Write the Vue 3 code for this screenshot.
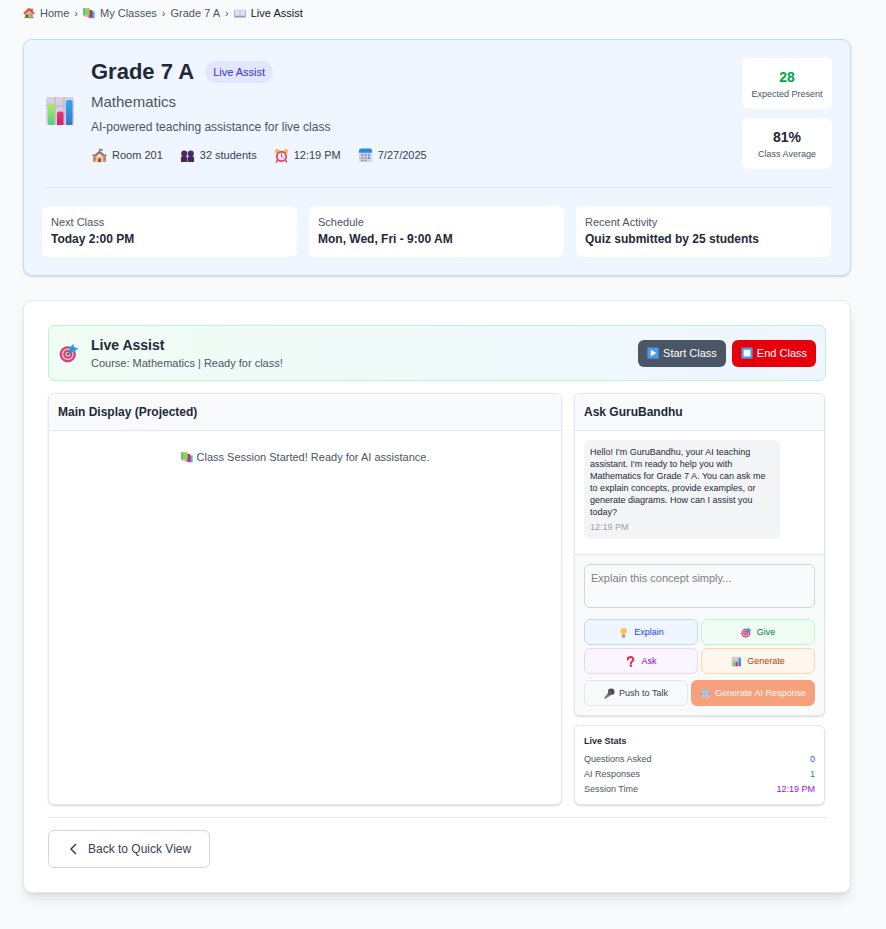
<script setup>
import { ref } from 'vue'

const meta = [
  { icon: 'school', text: 'Room 201' },
  { icon: 'people', text: '32 students' },
  { icon: 'clock', text: '12:19 PM' },
  { icon: 'calendar', text: '7/27/2025' },
]
const facts = [
  { label: 'Next Class', value: 'Today 2:00 PM' },
  { label: 'Schedule', value: 'Mon, Wed, Fri - 9:00 AM' },
  { label: 'Recent Activity', value: 'Quiz submitted by 25 students' },
]
const actions = [
  { icon: 'bulb', text: 'Explain', tone: 'blue' },
  { icon: 'target', text: 'Give', tone: 'green' },
  { icon: 'question', text: 'Ask', tone: 'purple' },
  { icon: 'chart', text: 'Generate', tone: 'orange' },
]
const stats = [
  { label: 'Questions Asked', value: '0', tone: 'v-blue' },
  { label: 'AI Responses', value: '1', tone: 'v-green' },
  { label: 'Session Time', value: '12:19 PM', tone: 'v-purple' },
]
const prompt = ref('')
</script>

<template>
  <div class="page">
    <svg class="defs" aria-hidden="true">
      <defs>
        <linearGradient id="g-green" x1="0" y1="0" x2="0" y2="1"><stop offset="0" stop-color="#b5ea5c" /><stop offset="1" stop-color="#4fd08c" /></linearGradient>
        <linearGradient id="g-blue" x1="0" y1="0" x2="0" y2="1"><stop offset="0" stop-color="#31a8f5" /><stop offset="1" stop-color="#3574cb" /></linearGradient>
        <linearGradient id="g-pink" x1="0" y1="0" x2="0" y2="1"><stop offset="0" stop-color="#e9356e" /><stop offset="1" stop-color="#d3216a" /></linearGradient>
        <linearGradient id="g-bulb" x1="0" y1="0" x2="1" y2="1"><stop offset="0" stop-color="#ffdf5d" /><stop offset="1" stop-color="#f5a73b" /></linearGradient>
      </defs>
      <symbol id="i-chart" viewBox="0 0 32 32">
        <rect x="2" y="2" width="28" height="28" rx="2" fill="#d6d0df" />
        <path d="M2 11h28M2 20h28M11 2v28M20 2v28" stroke="#b9afc5" stroke-width="1" />
        <path d="M4 30V10.500a2 2 0 0 1 2-2h2.500a2 2 0 0 1 2 2V30z" fill="url(#g-green)" />
        <path d="M13 30V18.500a2 2 0 0 1 2-2h2.500a2 2 0 0 1 2 2V30z" fill="url(#g-pink)" />
        <path d="M22 30V7a2 2 0 0 1 2-2h2.500a2 2 0 0 1 2 2v23z" fill="url(#g-blue)" />
      </symbol>
      <symbol id="i-home" viewBox="0 0 32 32">
        <path d="M22 4h4v9h-4z" fill="#a65245" />
        <path d="M5 15 16 6l11 9v14H5z" fill="#f3b07c" />
        <path d="M1 16 14.500 3.500a2 2 0 0 1 3 0L31 16l-2 4L16 9 3 20z" fill="#df493f" />
        <path d="M7 20h7v9H7z" fill="#72534c" />
        <path d="M18 18h7v7h-7z" fill="#59b4e8" />
        <path d="M4 26h4v4H4zM14 26h14v4H14z" fill="#7baa4b" />
      </symbol>
      <symbol id="i-books" viewBox="0 0 32 32">
        <path d="M20 12h11v18H20z" fill="#37b5ef" />
        <path d="M13 8h12v19l-12 1z" fill="#ca2464" />
        <path d="M1 3h17v20H1z" fill="#8bd160" />
        <path d="M1 3h3v20H1z" fill="#55a661" />
        <path d="M2 23h16l-2 3H5z" fill="#bda9c8" />
        <path d="m17 26 8-1v4l-6 1z" fill="#d83d76" />
      </symbol>
      <symbol id="i-book" viewBox="0 0 32 32">
        <path d="M1 8h30v20H1z" fill="#6a9fdd" />
        <path d="M3 6q8-2 13 1v18q-5-3-13-1zM29 6q-8-2-13 1v18q5-3 13-1z" fill="#e5e0ef" />
        <path d="M16 7v19M3 25q8-2 13 1 5-3 13-1" fill="none" stroke="#a49bc1" stroke-width="1.500" />
      </symbol>
      <symbol id="i-school" viewBox="0 0 32 32">
        <path d="M15 1h2v9h-2z" fill="#887080" /><path d="M17 2h6v4h-6z" fill="#59a75b" />
        <path d="M2 16h28v14H2z" fill="#d99667" />
        <path d="M8 14 16 7l8 7v16H8z" fill="#f7c08e" />
        <path d="m6 14 10-8 10 8-2 3-8-6-8 6z" fill="#8b6572" />
        <path d="M1 14h8v3H1zM23 14h8v3h-8z" fill="#a66f61" />
        <path d="M4 19h3v6H4zM25 19h3v6h-3z" fill="#558fba" />
        <circle cx="16" cy="16" r="2.500" fill="#f5f1f7" /><path d="M13 22h6v8h-6z" fill="#735161" />
      </symbol>
      <symbol id="i-people" viewBox="0 0 32 32">
        <circle cx="9" cy="12" r="6.500" fill="#4b2b67" /><circle cx="23" cy="12" r="6.500" fill="#4b2b67" />
        <path d="M2 30v-8q0-5 6-5h2q5 0 5.500 5v8zM16.500 30v-8q0-5 5.500-5h2q6 0 6 5v8z" fill="#472762" />
        <path d="M16 19v11" stroke="#8f71a7" />
      </symbol>
      <symbol id="i-clock" viewBox="0 0 32 32">
        <path d="m8 25-3 5M24 25l3 5" stroke="#bd4a72" stroke-width="3" stroke-linecap="round" />
        <circle cx="7" cy="7" r="5" fill="#f7bb42" /><circle cx="25" cy="7" r="5" fill="#f7bb42" />
        <circle cx="16" cy="18" r="12" fill="#ed4664" /><circle cx="16" cy="18" r="8" fill="#f2e8f3" />
        <path d="M16 12v6l4 3" fill="none" stroke="#6c5579" stroke-width="2" />
      </symbol>
      <symbol id="i-calendar" viewBox="0 0 32 32">
        <rect x="2" y="2" width="28" height="28" rx="4" fill="#d8d0e7" />
        <path d="M2 10V6a5 5 0 0 1 5-5h18a5 5 0 0 1 5 5v4z" fill="#278be5" />
        <path d="M7 13h4v4H7zM14 13h4v4h-4zM21 13h4v4h-4zM7 19h4v4H7zM14 19h4v4h-4zM7 25h4v3H7zM14 25h4v3h-4z" fill="#998ba9" />
        <path d="M21 19h4v4h-4z" fill="#278be5" />
      </symbol>
      <symbol id="i-target" viewBox="0 0 32 32">
        <circle cx="14" cy="18" r="13" fill="#dc3c70" /><circle cx="14" cy="18" r="9.500" fill="#d8bdd1" />
        <circle cx="14" cy="18" r="7" fill="#d33a6d" /><circle cx="14" cy="18" r="4" fill="#dac6d7" />
        <circle cx="14" cy="18" r="2" fill="#d33a6d" />
        <path d="m14 18 9-9" stroke="#346eb0" stroke-width="2" />
        <path d="m16 15 1-8 6-6 1 6 7 1-6 6z" fill="#35a2e9" /><path d="m17 14 8-8" stroke="#1c6bbd" stroke-width="1.500" />
      </symbol>
      <symbol id="i-play" viewBox="0 0 32 32">
        <rect x="1" y="1" width="30" height="30" rx="2" fill="#469bed" /><path d="m10 7 15 9-15 9z" fill="#fff" />
      </symbol>
      <symbol id="i-stop" viewBox="0 0 32 32">
        <rect x="1" y="1" width="30" height="30" rx="2" fill="#469bed" /><rect x="7" y="7" width="18" height="18" rx="1" fill="#fff" />
      </symbol>
      <symbol id="i-bulb" viewBox="0 0 32 32">
        <path d="M11 22h10v6q0 3-3 3h-4q-3 0-3-3z" fill="#a99ab2" />
        <path d="M16 2a9.500 9.500 0 0 0-9.500 9.500c0 5 4 6 5 11.500h9c1-5.500 5-6.500 5-11.500A9.500 9.500 0 0 0 16 2z" fill="url(#g-bulb)" />
        <path d="M13 15v8M19 15v8" stroke="#fff0af" stroke-width="1.500" />
      </symbol>
      <symbol id="i-question" viewBox="0 0 32 32">
        <path d="M8 10q1-7 8-7t8 7q0 4-4 6-3 2-3 6" fill="none" stroke="#e62f55" stroke-width="6" stroke-linecap="round" />
        <circle cx="17" cy="28" r="3.500" fill="#cb284e" />
      </symbol>
      <symbol id="i-mic" viewBox="0 0 32 32">
        <path d="m1 28 12-16 8 8L4 31q-4 1-3-3z" fill="#81758b" />
        <circle cx="21" cy="11" r="9.500" fill="#514656" /><path d="m13 9 11 11" stroke="#a99eaf" stroke-width="2" />
        <path d="m19 6 6 6" stroke="#85798b" stroke-width="2" />
      </symbol>
      <symbol id="i-robot" viewBox="0 0 32 32">
        <path d="M6 10q1-8 10-8t10 8z" fill="#4d76b4" /><rect x="4" y="8" width="24" height="21" rx="5" fill="#9d94bd" />
        <rect x="2" y="12" width="28" height="8" rx="3" fill="#345a9c" />
        <path d="M9 14h4v4H9zM19 14h4v4h-4z" fill="#eaf6ff" /><path d="M10 24h12" stroke="#514467" stroke-width="2" />
      </symbol>
    </svg>

    <nav class="crumbs" aria-label="Breadcrumb">
      <a href="#"><svg class="ico"><use href="#i-home" /></svg>Home</a>
      <span>›</span>
      <a href="#"><svg class="ico"><use href="#i-books" /></svg>My Classes</a>
      <span>›</span>
      <a href="#">Grade 7 A</a>
      <span>›</span>
      <a href="#" class="current" aria-current="page"><svg class="ico"><use href="#i-book" /></svg>Live Assist</a>
    </nav>

    <header class="hero">
      <div class="hero-top">
        <div class="identity">
          <svg class="hero-icon"><use href="#i-chart" /></svg>
          <div>
            <div class="title-row">
              <h1>Grade 7 A</h1>
              <span class="badge">Live Assist</span>
            </div>
            <p class="subject">Mathematics</p>
            <p class="summary">AI-powered teaching assistance for live class</p>
            <ul class="meta">
              <li v-for="m in meta" :key="m.icon"><svg class="meta-icon"><use :href="'#i-' + m.icon" /></svg>{{ m.text }}</li>
            </ul>
          </div>
        </div>
        <div class="figures">
          <div class="figure"><strong class="good">28</strong><span>Expected Present</span></div>
          <div class="figure"><strong>81%</strong><span>Class Average</span></div>
        </div>
      </div>
      <div class="facts">
        <div v-for="f in facts" :key="f.label" class="fact">
          <span>{{ f.label }}</span>
          <strong>{{ f.value }}</strong>
        </div>
      </div>
    </header>

    <main class="board">
      <section class="banner">
        <svg class="banner-icon"><use href="#i-target" /></svg>
        <div class="banner-text">
          <h2>Live Assist</h2>
          <p>Course: Mathematics | Ready for class!</p>
        </div>
        <div class="banner-actions">
          <button type="button" class="solid start"><svg class="ico"><use href="#i-play" /></svg>Start Class</button>
          <button type="button" class="solid end"><svg class="ico"><use href="#i-stop" /></svg>End Class</button>
        </div>
      </section>

      <div class="columns">
        <section class="panel display">
          <h3>Main Display (Projected)</h3>
          <p class="status"><svg class="ico"><use href="#i-books" /></svg>Class Session Started! Ready for AI assistance.</p>
        </section>

        <div class="side">
          <section class="panel">
            <h3>Ask GuruBandhu</h3>
            <div class="chat">
              <div class="bubble">
                <p>Hello! I'm GuruBandhu, your AI teaching assistant. I'm ready to help you with Mathematics for Grade 7 A. You can ask me to explain concepts, provide examples, or generate diagrams. How can I assist you today?</p>
                <time>12:19 PM</time>
              </div>
            </div>
            <form class="composer" @submit.prevent>
              <textarea v-model="prompt" aria-label="Message" placeholder="Explain this concept simply..." rows="2"></textarea>
              <div class="quick">
                <button v-for="a in actions" :key="a.text" type="button" class="chip" :class="a.tone"><svg class="chip-icon"><use :href="'#i-' + a.icon" /></svg>{{ a.text }}</button>
              </div>
              <div class="send">
                <button type="button" class="chip talk"><svg class="chip-icon"><use href="#i-mic" /></svg>Push to Talk</button>
                <button type="submit" class="chip respond" disabled><svg class="chip-icon"><use href="#i-robot" /></svg>Generate AI Response</button>
              </div>
            </form>
          </section>

          <section class="panel stats">
            <h4>Live Stats</h4>
            <dl>
              <div v-for="s in stats" :key="s.label">
                <dt>{{ s.label }}</dt>
                <dd :class="s.tone">{{ s.value }}</dd>
              </div>
            </dl>
          </section>
        </div>
      </div>

      <footer class="foot">
        <button type="button" class="back">
          <svg class="chevron" viewBox="0 0 12 12"><path d="M8 1 3 6l5 5" /></svg>Back to Quick View
        </button>
      </footer>
    </main>
  </div>
</template>

<style>
body {
  margin: 0;
  background: #f9fafb;
}
</style>

<style scoped>
.page {
  padding: 4px 35px 36px 23px;
  color: #1e2939;
  font-family: "Liberation Sans", Arial, sans-serif;
  font-size: 11px;
  line-height: 18px;
}
.page * { box-sizing: border-box; }
h1, h2, h3, h4, p, ul, dl, dd { margin: 0; padding: 0; }
button, textarea { font: inherit; }
button { cursor: pointer; }
.defs { position: absolute; width: 0; height: 0; }
.ico { width: 12px; height: 12px; flex: none; }

.crumbs {
  display: flex;
  align-items: center;
  gap: 5px;
  color: #4a5565;
}
.crumbs a {
  display: flex;
  align-items: center;
  gap: 5px;
  color: inherit;
  text-decoration: none;
}
.crumbs .current { color: #101828; }

.hero {
  margin-top: 17px;
  padding: 18px;
  border: 1px solid #bedbff;
  border-radius: 9px;
  background: #eff6ff;
  box-shadow: 0 1px 2px rgba(0, 0, 0, 0.15);
}
.hero-top {
  display: flex;
  justify-content: space-between;
  align-items: flex-start;
  padding-bottom: 18px;
  border-bottom: 1px solid #e0e5ee;
}
.identity {
  display: flex;
  align-items: center;
  gap: 15px;
}
.hero-icon { width: 32px; height: 32px; margin-left: 2px; }
.title-row {
  display: flex;
  align-items: center;
  gap: 11px;
}
h1 {
  font-size: 22px;
  line-height: 27px;
}
.badge {
  padding: 2px 8px;
  border-radius: 12px;
  background: #e0e7ff;
  color: #432dd7;
}
.subject {
  margin-top: 5px;
  color: #4a5565;
  font-size: 15px;
  line-height: 24px;
}
.summary {
  margin-top: 4px;
  color: #4a5565;
  font-size: 12px;
}
.meta {
  display: flex;
  gap: 16px;
  margin-top: 10px;
  color: #364153;
  list-style: none;
}
.meta li {
  display: flex;
  align-items: center;
  gap: 5px;
}
.meta-icon { width: 15px; height: 15px; margin-left: 1px; }
.figures {
  display: grid;
  gap: 9px;
}
.figure {
  display: flex;
  flex-direction: column;
  min-width: 90px;
  padding: 9px;
  border-radius: 6px;
  background: #fff;
  text-align: center;
}
.figure strong {
  font-size: 14px;
  line-height: 21px;
}
.figure span {
  color: #4a5565;
  font-size: 9px;
  line-height: 12px;
}
.figure .good { color: #00a63e; }
.facts {
  display: grid;
  grid-template-columns: repeat(3, 1fr);
  gap: 12px;
  padding: 18px 1px 0 0;
}
.fact {
  display: flex;
  flex-direction: column;
  padding: 9px;
  border-radius: 6px;
  background: #fff;
}
.fact span {
  color: #4a5565;
  line-height: 15px;
}
.fact strong { font-size: 12px; }

.board {
  margin-top: 24px;
  padding: 24px;
  border: 1px solid #e5e7eb;
  border-radius: 9px;
  background: #fff;
  box-shadow: 0 8px 12px -2px rgba(0, 0, 0, 0.1), 0 3px 5px -3px rgba(0, 0, 0, 0.1);
}
.banner {
  display: flex;
  align-items: center;
  padding: 9px;
  border: 1px solid #b9f8cf;
  border-radius: 6px;
  background: linear-gradient(to right, #f0fdf4, #eff6ff);
}
.banner-icon { width: 20px; height: 20px; margin: 0 12px 0 1px; }
.banner-text { flex: 1; }
.banner h2 {
  font-size: 14px;
  line-height: 21px;
}
.banner p {
  color: #4a5565;
  line-height: 15px;
}
.banner-actions { display: flex; gap: 6px; }
.solid {
  display: flex;
  align-items: center;
  gap: 4px;
  padding: 6px 9px;
  border: 0;
  border-radius: 6px;
  color: #fff;
  line-height: 15px;
}
.start { background: #4a5565; }
.end { background: #e7000b; }

.columns {
  display: grid;
  grid-template-columns: repeat(3, minmax(0, 1fr));
  gap: 12px;
  margin-top: 12px;
  padding-right: 1px;
}
.display { grid-column: span 2; }
.side {
  display: flex;
  flex-direction: column;
  gap: 9px;
}
.panel {
  overflow: hidden;
  border: 1px solid #e5e7eb;
  border-radius: 6px;
  background: #fff;
  box-shadow: 0 1px 2px rgba(0, 0, 0, 0.15);
}
h3 {
  padding: 9px;
  border-bottom: 1px solid #e5e7eb;
  background: #f9fafb;
  font-size: 12px;
}
.status {
  display: flex;
  justify-content: center;
  align-items: center;
  gap: 4px;
  padding: 17px 18px;
  color: #4a5565;
}
.chat { padding: 9px 9px 15px; }
.bubble {
  max-width: 85%;
  padding: 6px;
  border-radius: 6px;
  background: #f3f4f6;
  font-size: 9px;
  line-height: 12px;
}
.bubble time {
  display: block;
  margin-top: 3px;
  color: #99a1af;
}
.composer {
  padding: 9px;
  border-top: 1px solid #e5e7eb;
  background: #f9fafb;
}
textarea {
  display: block;
  width: 100%;
  height: 44px;
  margin-bottom: 11px;
  padding: 6px;
  border: 1px solid #d1d5dc;
  border-radius: 6px;
  background: #f9fafb;
  line-height: 15px;
  resize: none;
}
textarea::placeholder { color: #808080; }
.quick {
  display: grid;
  grid-template-columns: 1fr 1fr;
  gap: 3px;
}
.chip {
  display: flex;
  justify-content: center;
  align-items: center;
  gap: 5px;
  padding: 6px;
  border: 1px solid #e5e7eb;
  border-radius: 6px;
  background: #f9fafb;
  color: #364153;
  font-size: 9px;
  line-height: 12px;
}
.chip-icon { width: 11px; height: 11px; flex: none; }
.blue { border-color: #bedbff; background: #eff6ff; color: #1447e6; }
.green { border-color: #b9f8cf; background: #f0fdf4; color: #008236; }
.purple { border-color: #e9d4ff; background: #faf5ff; color: #8200db; }
.orange { border-color: #ffd6a7; background: #fff7ed; color: #ca3500; }
.send {
  display: flex;
  gap: 3px;
  margin-top: 6px;
}
.talk { flex: 1; gap: 4px; }
.respond {
  gap: 4px;
  padding: 6px 8px;
  border-color: #f54900;
  background: #f54900;
  color: #fff;
  opacity: 0.5;
}
.stats { padding: 9px 9px 7px; font-size: 9px; }
h4 {
  margin-bottom: 5px;
  font-size: 9px;
  line-height: 12px;
}
.stats dl div {
  display: flex;
  justify-content: space-between;
  color: #4a5565;
  line-height: 15px;
}
.stats .v-blue { color: #155dfc; }
.stats .v-green { color: #00a63e; }
.stats .v-purple { color: #9810fa; }

.foot {
  margin-top: 12px;
  padding-top: 12px;
  border-top: 1px solid #e5e7eb;
}
.back {
  display: flex;
  align-items: center;
  gap: 8px;
  padding: 9px 18px 9px 19px;
  border: 1px solid #d1d5dc;
  border-radius: 6px;
  background: #fff;
  color: #364153;
  font-size: 12px;
  line-height: 18px;
}
.chevron {
  width: 12px;
  height: 12px;
  fill: none;
  stroke: currentColor;
  stroke-width: 1.5;
}
</style>
